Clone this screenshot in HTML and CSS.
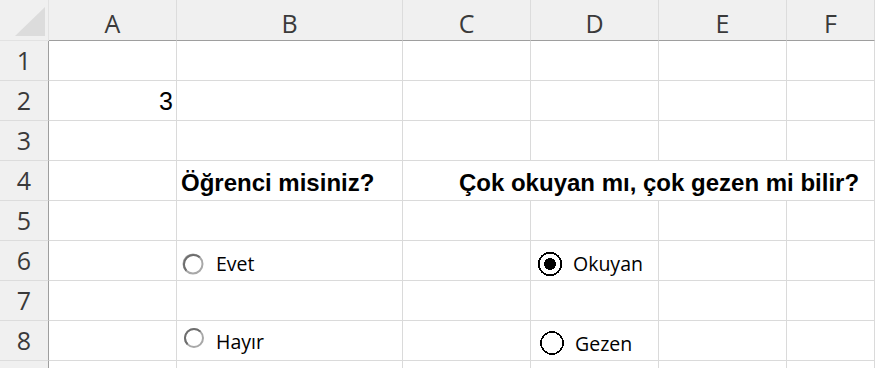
FILE: index.html
```html
<!DOCTYPE html>
<html lang="tr">
<head>
<meta charset="utf-8">
<title>Sheet</title>
<link rel="stylesheet" href="styles.css">
</head>
<body>
<div class="sheet">
  <div class="c corner"><svg class="tri" width="48" height="40" viewBox="0 0 48 40"><polygon points="15,36 45,7 45,36" fill="#dcdcdc"/></svg></div>
  <div class="c ch">A</div>
  <div class="c ch">B</div>
  <div class="c ch">C</div>
  <div class="c ch">D</div>
  <div class="c ch">E</div>
  <div class="c ch">F</div>

  <div class="c rh">1</div><div class="c"></div><div class="c"></div><div class="c"></div><div class="c"></div><div class="c"></div><div class="c"></div>

  <div class="c rh">2</div><div class="c num">3</div><div class="c"></div><div class="c"></div><div class="c"></div><div class="c"></div><div class="c"></div>

  <div class="c rh">3</div><div class="c"></div><div class="c"></div><div class="c"></div><div class="c"></div><div class="c"></div><div class="c"></div>

  <div class="c rh">4</div><div class="c"></div><div class="c title">Öğrenci misiniz?</div><div class="c noright"></div><div class="c title merged"><span>Çok okuyan mı, çok gezen mi bilir?</span></div><div class="c"></div>

  <div class="c rh">5</div><div class="c"></div><div class="c"></div><div class="c"></div><div class="c"></div><div class="c"></div><div class="c"></div>

  <div class="c rh">6</div><div class="c"></div>
  <div class="c opt opt-evet">
    <svg class="radio r-gray" width="24" height="24" viewBox="0 0 24 24"><circle cx="12" cy="12" r="9.5" fill="#fff" stroke="#a8a8a8" stroke-width="2"/><path d="M18.7 5.3A9.5 9.5 0 0 0 5.3 18.7" fill="none" stroke="#6e6e6e" stroke-width="2"/></svg>
    <span class="lbl">Evet</span>
  </div>
  <div class="c"></div>
  <div class="c opt opt-okuyan">
    <svg class="radio r-black" width="26" height="26" viewBox="0 0 26 26" shape-rendering="crispEdges"><circle cx="13" cy="13" r="11.3" fill="#fff" stroke="#000" stroke-width="1.6"/><circle cx="13" cy="13" r="6" fill="#000"/></svg>
    <span class="lbl">Okuyan</span>
  </div>
  <div class="c"></div><div class="c"></div>

  <div class="c rh">7</div><div class="c"></div><div class="c"></div><div class="c"></div><div class="c"></div><div class="c"></div><div class="c"></div>

  <div class="c rh">8</div><div class="c"></div>
  <div class="c opt opt-hayir">
    <svg class="radio r-gray" width="24" height="24" viewBox="0 0 24 24"><circle cx="12" cy="12" r="9" fill="#fff" stroke="#a8a8a8" stroke-width="2"/><path d="M18.4 5.6A9 9 0 0 0 5.6 18.4" fill="none" stroke="#6e6e6e" stroke-width="2"/></svg>
    <span class="lbl">Hayır</span>
  </div>
  <div class="c"></div>
  <div class="c opt opt-gezen">
    <svg class="radio r-black" width="26" height="26" viewBox="0 0 26 26" shape-rendering="crispEdges"><circle cx="13" cy="13" r="11" fill="#fff" stroke="#000" stroke-width="1.6"/></svg>
    <span class="lbl">Gezen</span>
  </div>
  <div class="c"></div><div class="c"></div>

  <div class="c rh"></div><div class="c"></div><div class="c"></div><div class="c"></div><div class="c"></div><div class="c"></div><div class="c"></div>
</div>
</body>
</html>
```

FILE: styles.css
```css
html, body {
  margin: 0;
  padding: 0;
  background: #ffffff;
  overflow: hidden;
}

.sheet {
  display: grid;
  grid-template-columns: 49px 128px 226px 128px 128px 128px 1fr;
  grid-template-rows: 41px repeat(9, 40px);
  width: 875px;
  height: 368px;
  overflow: hidden;
  font-family: "Open Sans", "Noto Sans", sans-serif;
}

.c {
  box-sizing: border-box;
  border-right: 1px solid #dadada;
  border-bottom: 1px solid #dadada;
  display: flex;
  min-width: 0;
  white-space: nowrap;
}

.corner {
  background: #f0f0f0;
  border-right-color: #e2e2e2;
  border-bottom-color: #e2e2e2;
}

.tri {
  display: block;
}

.ch {
  background: #f0f0f0;
  border-right-color: #dcdcdc;
  border-bottom-color: #9e9e9e;
  justify-content: center;
  align-items: flex-end;
  padding-bottom: 4px;
  font-size: 25px;
  line-height: 25px;
  color: #3a3a3a;
}

.rh {
  background: #f0f0f0;
  border-right-color: #9e9e9e;
  border-bottom-color: #dcdcdc;
  justify-content: center;
  align-items: flex-end;
  padding-bottom: 7px;
  font-size: 25px;
  line-height: 25px;
  color: #3a3a3a;
}

.num {
  justify-content: flex-end;
  align-items: flex-end;
  padding-right: 3px;
  padding-bottom: 6px;
  font-family: "Liberation Sans", Arial, sans-serif;
  font-size: 25px;
  line-height: 25px;
  color: #000;
}

.title {
  align-items: flex-end;
  padding-left: 4px;
  padding-bottom: 5px;
  font-family: "Liberation Sans", Arial, sans-serif;
  font-weight: bold;
  font-size: 24px;
  line-height: 24px;
  color: #000;
}

.noright {
  border-right: none;
}

.merged {
  grid-column: span 2;
  justify-content: center;
  padding-left: 0;
  border-right: none;
  overflow: visible;
}

.opt {
  align-items: center;
  align-self: start;
  height: 40px;
}

.lbl {
  font-family: "Open Sans", "Noto Sans", sans-serif;
  font-size: 19.5px;
  line-height: 24px;
  color: #000;
}

.radio {
  display: block;
  flex: none;
}

.opt-evet {
  align-items: flex-start;
  padding-top: 11px;
  padding-left: 4px;
  gap: 11px;
}

.opt-okuyan {
  align-items: flex-start;
  padding-top: 10px;
  padding-left: 6px;
  gap: 10px;
}

.opt-okuyan .lbl {
  margin-top: 1px;
}

.opt-hayir {
  align-items: flex-start;
  padding-top: 5px;
  padding-left: 5px;
  gap: 10px;
}

.opt-hayir .lbl {
  margin-top: 4px;
}

.opt-gezen {
  align-items: flex-start;
  padding-top: 9px;
  padding-left: 8px;
  gap: 10px;
}

.opt-gezen .lbl {
  margin-top: 2px;
}
```
